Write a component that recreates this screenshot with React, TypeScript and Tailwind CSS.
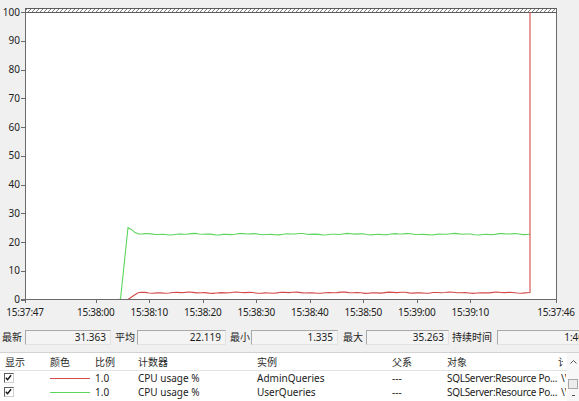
import React from 'react';

// value -> pixel row on the plot
const yAt = (v: number) => 299.5 - v * 2.875;

function wave(x0: number, x1: number, base: number, a: number, b: number, phase: number) {
  const pts: string[] = [];
  for (let x = x0; x <= x1; x += 4) {
    const y = base + a * Math.sin(x * 0.12 + phase) + b * Math.sin(x * 0.41 + phase * 2);
    pts.push(`L${x},${y.toFixed(2)}`);
  }
  return pts.join(' ');
}

const greenPath = `M118,299.5 L120.5,299 L128,227.6 L131,229.2 L135,232.6 L139,234 ${wave(143, 527, 234.2, 0.5, 0.35, 0.3)} L530,234.2`;
const redPath = `M128,299.5 L133,296 L138,292.8 L141.5,292.2 ${wave(145, 527, 292.7, 0.4, 0.3, 1.2)} L530,292.6 L530,12`;

const yTicks = [0, 10, 20, 30, 40, 50, 60, 70, 80, 90, 100];
const xTicks: [number, string][] = [
  [25, '15:37:47'],
  [95.7, '15:38:00'],
  [149.2, '15:38:10'],
  [202.7, '15:38:20'],
  [256.2, '15:38:30'],
  [309.7, '15:38:40'],
  [363.2, '15:38:50'],
  [416.7, '15:39:00'],
  [470.2, '15:39:10'],
  [556, '15:37:46'],
];

function Chart() {
  return (
    <svg width={579} height={322} className="block">
      <defs>
        <pattern id="hatch" width="4" height="4" patternUnits="userSpaceOnUse">
          <path d="M0,4 L4,0" stroke="#7a7a7a" strokeWidth="1" />
        </pattern>
      </defs>
      <rect x={25} y={8} width={531} height={291} fill="#ffffff" />
      <rect x={25} y={9} width={531} height={3} fill="url(#hatch)" />
      <line x1={25} x2={556} y1={8.5} y2={8.5} stroke="#5c5c5c" />
      <line x1={25} x2={556} y1={12.5} y2={12.5} stroke="#5c5c5c" />

      <path d={greenPath} fill="none" stroke="#5cd65c" strokeWidth={1.1} />
      <path d={redPath} fill="none" stroke="#d44a4a" strokeWidth={1.1} />

      {/* axes */}
      <line x1={25.5} x2={25.5} y1={8} y2={303} stroke="#6a6a6a" />
      <line x1={556.5} x2={556.5} y1={8} y2={303} stroke="#6a6a6a" />
      <line x1={21} x2={557} y1={299.5} y2={299.5} stroke="#6a6a6a" />

      {yTicks.map((v) => (
        <g key={v}>
          <line x1={21} x2={25} y1={Math.round(yAt(v)) + 0.5} y2={Math.round(yAt(v)) + 0.5} stroke="#6a6a6a" />
          <text x={20} y={yAt(v) + 3.6} textAnchor="end" fontSize={10} fill="#222">
            {v}
          </text>
        </g>
      ))}

      {xTicks.map(([x, label]) => (
        <g key={label}>
          <line x1={Math.round(x) + 0.5} x2={Math.round(x) + 0.5} y1={299} y2={303} stroke="#6a6a6a" />
          <text x={x} y={315.5} textAnchor="middle" fontSize={10} letterSpacing={-0.3} fill="#222">
            {label}
          </text>
        </g>
      ))}
    </svg>
  );
}

function StatBox({ value, className }: { value: string; className: string }) {
  return (
    <div
      className={`shrink-0 h-[15px] flex items-center justify-end pr-[4px] bg-[#f4f4f4] border border-[#a9a9a9] border-r-[#e2e2e2] border-b-[#e2e2e2] whitespace-nowrap ${className}`}
    >
      {value}
    </div>
  );
}

function Stats() {
  return (
    <div className="h-[30px] flex items-center pl-[2px] overflow-hidden whitespace-nowrap">
      <span className="shrink-0">最新</span>
      <StatBox className="ml-[3px] w-[86px]" value="31.363" />
      <span className="shrink-0 ml-[4px]">平均</span>
      <StatBox className="ml-[2px] w-[89px]" value="22.119" />
      <span className="shrink-0 ml-[4px]">最小</span>
      <StatBox className="ml-[1px] w-[87px]" value="1.335" />
      <span className="shrink-0 ml-[5px]">最大</span>
      <StatBox className="ml-[3px] w-[83px]" value="35.263" />
      <span className="shrink-0 ml-[3px]">持续时间</span>
      <StatBox className="ml-[5px] w-[92px]" value="1:40" />
    </div>
  );
}

function Check() {
  return (
    <span className="relative block w-[10px] h-[10px] bg-white border border-[#5e5e5e] border-r-[#cfcfcf] border-b-[#cfcfcf]">
      <svg viewBox="0 0 10 10" className="absolute left-0 top-0 w-[8px] h-[8px]">
        <path d="M1,4.6 L3.2,7 L7.6,1.6" stroke="#111" strokeWidth={1.7} fill="none" />
      </svg>
    </span>
  );
}

const rows = [
  { color: 'bg-[#d44a4a]', instance: 'AdminQueries' },
  { color: 'bg-[#5cd65c]', instance: 'UserQueries' },
];

function Table() {
  return (
    <div className="flex h-[49px] bg-white border-t border-[#d2d2d2] overflow-hidden">
      <div className="w-[567px]">
        <div className="grid grid-cols-[46px_46px_42px_119px_135px_55px_115px_9px] h-[18px] items-center border-b border-[#e3e3e3] text-[#2a2a2a]">
          <span className="pl-[5px]">显示</span>
          <span className="pl-[4px]">颜色</span>
          <span className="pl-[3px]">比例</span>
          <span className="pl-[4px]">计数器</span>
          <span className="pl-[4px]">实例</span>
          <span className="pl-[4px]">父系</span>
          <span className="pl-[4px]">对象</span>
          <span className="overflow-hidden whitespace-nowrap">
            <span className="block w-[5px] overflow-hidden">计算机</span>
          </span>
        </div>
        {rows.map((r) => (
          <div
            key={r.instance}
            className="grid grid-cols-[46px_46px_42px_119px_135px_55px_115px_9px] h-[14px] items-center whitespace-nowrap"
          >
            <span className="pl-[4px]">
              <Check />
            </span>
            <span className="pl-[4px] flex items-center">
              <span className={`block w-[40px] h-px ${r.color}`} />
            </span>
            <span className="pl-[3px]">1.0</span>
            <span className="pl-[4px]">CPU usage %</span>
            <span className="pl-[4px]">{r.instance}</span>
            <span className="pl-[4px]">---</span>
            <span className="pl-[4px] overflow-hidden tracking-[-0.3px]">SQLServer:Resource Po...</span>
            <span className="pl-[3px] overflow-hidden">
              <span className="block w-[5px] overflow-hidden">\\WIN</span>
            </span>
          </div>
        ))}
      </div>
      {/* vertical scrollbar */}
      <div className="w-[12px] flex flex-col items-center bg-[#f7f7f7]">
        <div className="h-[18px] flex items-center justify-center">
          <svg width="7" height="4" viewBox="0 0 7 4">
            <path d="M0.5,3.5 L3.5,0.5 L6.5,3.5" stroke="#555" fill="none" />
          </svg>
        </div>
        <div className="mt-[8px] w-[10px] h-[10px] bg-[#ececec] border border-[#a8a8a8]" />
        <div className="mt-[6px] w-[3px] h-px bg-[#555]" />
      </div>
    </div>
  );
}

export default function App() {
  return (
    <div className="w-[579px] h-[401px] overflow-hidden bg-[#f0f0f0] text-[10px] leading-none text-[#1c1c1c] font-['Noto_Sans','Noto_Sans_CJK_SC',sans-serif]">
      <Chart />
      <Stats />
      <Table />
    </div>
  );
}
